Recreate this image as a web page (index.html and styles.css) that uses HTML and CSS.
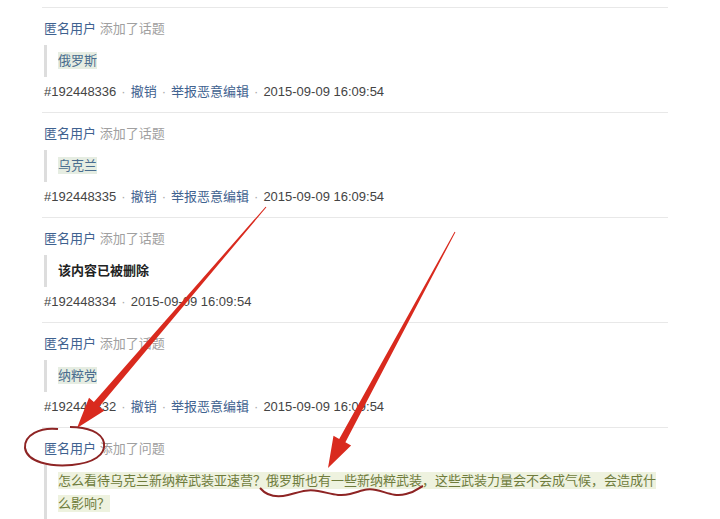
FILE: index.html
```html
<!DOCTYPE html>
<html lang="zh-CN">
<head>
    <meta charset="UTF-8">
    <title>修改记录</title>
    <link rel="stylesheet" href="styles.css">
</head>
<body>

<div class="log">
    <div class="item">
        <div class="head"><a class="user">匿名用户</a> <span class="action">添加了话题</span></div>
        <blockquote class="content"><ins class="topic">俄罗斯</ins></blockquote>
        <div class="meta">#192448336<span class="dot">·</span><a>撤销</a><span class="dot">·</span><a>举报恶意编辑</a><span class="dot">·</span>2015-09-09 16:09:54</div>
    </div>

    <div class="item">
        <div class="head"><a class="user">匿名用户</a> <span class="action">添加了话题</span></div>
        <blockquote class="content"><ins class="topic">乌克兰</ins></blockquote>
        <div class="meta">#192448335<span class="dot">·</span><a>撤销</a><span class="dot">·</span><a>举报恶意编辑</a><span class="dot">·</span>2015-09-09 16:09:54</div>
    </div>

    <div class="item">
        <div class="head"><a class="user">匿名用户</a> <span class="action">添加了话题</span></div>
        <blockquote class="content"><strong class="deleted">该内容已被删除</strong></blockquote>
        <div class="meta">#192448334<span class="dot">·</span>2015-09-09 16:09:54</div>
    </div>

    <div class="item">
        <div class="head"><a class="user">匿名用户</a> <span class="action">添加了话题</span></div>
        <blockquote class="content"><ins class="topic">纳粹党</ins></blockquote>
        <div class="meta">#192448332<span class="dot">·</span><a>撤销</a><span class="dot">·</span><a>举报恶意编辑</a><span class="dot">·</span>2015-09-09 16:09:54</div>
    </div>

    <div class="item last">
        <div class="head"><a class="user">匿名用户</a> <span class="action">添加了问题</span></div>
        <blockquote class="content question"><ins class="added">怎么看待乌克兰新纳粹武装亚速营？俄罗斯也有一些新纳粹武装，这些武装力量会不会成气候，会造成什么影响？</ins></blockquote>
    </div>
</div>

<!-- red marks drawn over the screenshot -->
<svg class="marks" width="720" height="519" viewBox="0 0 720 519">
    <polygon points="265.6,206.7 266.4,207.3 99.3,406.5 104.2,410.7 77,428 89.0,397.7 93.9,401.9" fill="#d92a1e"/>
    <polygon points="454.6,231.8 455.4,232.2 345.4,442.3 351.1,445.4 328,468 333.5,435.8 339.2,438.9" fill="#d92a1e"/>
    <path d="M58,429 C40,427 24,435 25,448 C27,462 50,467 72,465 C93,463 106,455 104,443 C102,432 87,427 70,427" fill="none" stroke="#8e2424" stroke-width="2"/>
    <path d="M260,488 C266,495 276,498 288,495 S306,489 318,491 S338,497 350,494 S366,488 376,490 S394,497 406,494 S418,488 423,486" fill="none" stroke="#8e2424" stroke-width="2"/>
</svg>

</body>
</html>
```

FILE: styles.css
```css
body {
    margin: 0;
    background: #ffffff;
    font-family: "Liberation Sans", "Noto Sans CJK SC", sans-serif;
    font-size: 13px;
    color: #444;
    overflow: hidden;
}

a {
    color: #3f6290;
    text-decoration: none;
    cursor: pointer;
}

.log {
    width: 626px;
    margin-left: 42px;
    padding-top: 7px;
}

.item {
    border-top: 1px solid #e8e8e8;
    padding: 11px 0 10px 2px;
}

.head {
    line-height: 20px;
}

.action {
    color: #a0a0a0;
}

.content {
    margin: 6px 0 0 0;
    padding: 6px 0 6px 11px;
    border-left: 3px solid #dddddd;
    line-height: 20px;
}

.topic {
    text-decoration: none;
    color: #4a6d8f;
    background: #e6ede2;
    padding: 1px 0;
}

.deleted {
    color: #222;
}

.question {
    padding: 4px 0 20px 11px;
    line-height: 23px;
    width: 602px;
}

.added {
    text-decoration: none;
    color: #6f7c3c;
    background: #eef2df;
    padding: 1px 0;
}

.meta {
    margin-top: 5px;
    line-height: 20px;
}

.dot {
    color: #aaa;
    margin: 0 5px;
}

.marks {
    position: absolute;
    left: 0;
    top: 0;
    pointer-events: none;
}
```
